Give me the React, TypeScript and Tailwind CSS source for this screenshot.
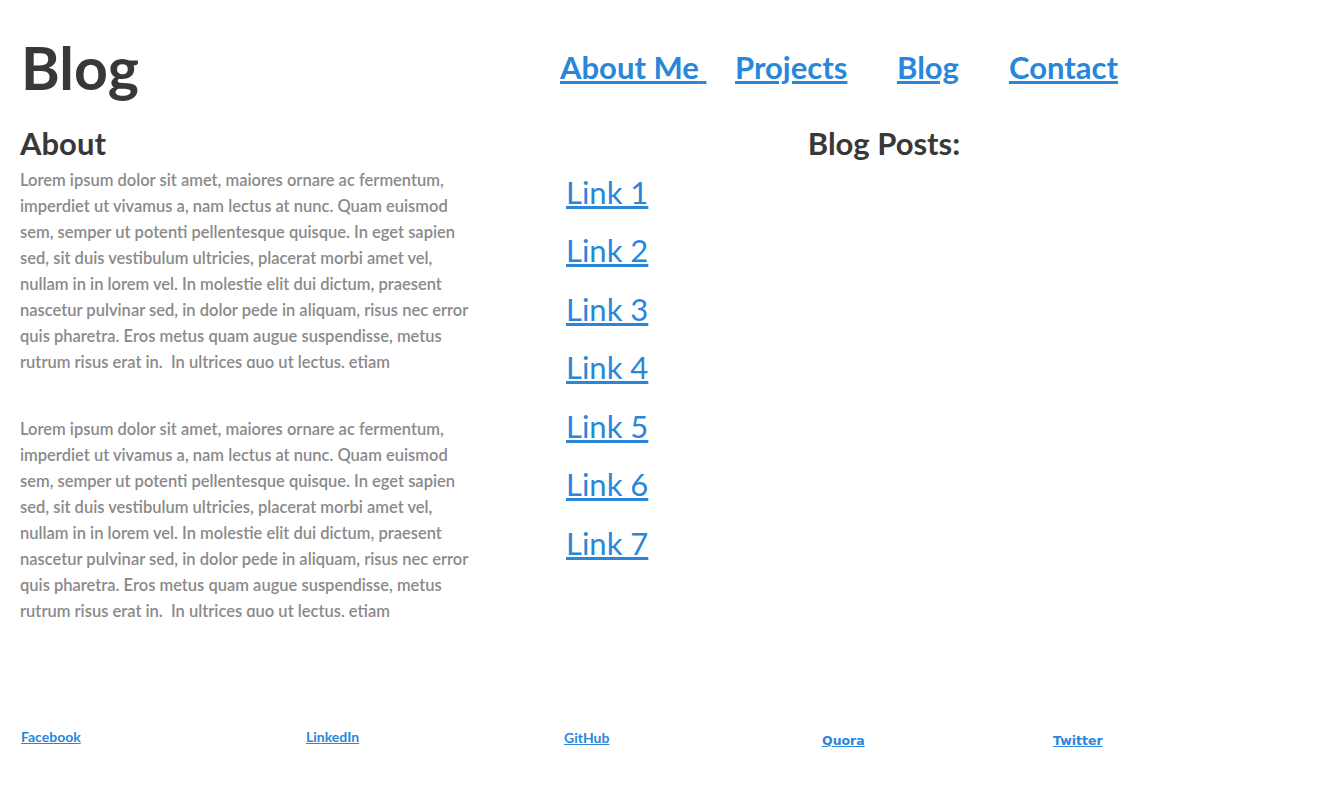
import React from "react";

// the reference wraps these lines exactly like this
const loremLines = [
  "Lorem ipsum dolor sit amet, maiores ornare ac fermentum,",
  "imperdiet ut vivamus a, nam lectus at nunc. Quam euismod",
  "sem, semper ut potenti pellentesque quisque. In eget sapien",
  "sed, sit duis vestibulum ultricies, placerat morbi amet vel,",
  "nullam in in lorem vel. In molestie elit dui dictum, praesent",
  "nascetur pulvinar sed, in dolor pede in aliquam, risus nec error",
  "quis pharetra. Eros metus quam augue suspendisse, metus",
  "rutrum risus erat in.  In ultrices quo ut lectus, etiam",
  "vestibulum urna a est, pretium luctus euismod nisl.",
];

const posts = ["Link 1", "Link 2", "Link 3", "Link 4", "Link 5", "Link 6", "Link 7"];

function Lorem({ className }: { className: string }) {
  return (
    <p
      className={
        "w-[452px] h-[201px] overflow-hidden text-[16.5px] font-semibold leading-[26px] text-[#8a8a8a] " +
        className
      }
    >
      {loremLines.map((l, i) => (
        <span key={i} className="block whitespace-pre">
          {l}
        </span>
      ))}
    </p>
  );
}

export default function App() {
  return (
    <div className="min-h-screen bg-white font-['Lato',sans-serif] text-[#383838]">
      {/* header */}
      <div className="flex items-center h-[90px] mt-[22px]">
        <h1 className="w-[560px] pl-[21px] text-[59px] font-bold leading-none">Blog</h1>
        <nav className="flex items-center">
          <a href="#" className="w-[175px] text-[31px] font-bold text-[#2a86d9] underline whitespace-pre">
            About Me{" "}
          </a>
          <a href="#" className="w-[162px] text-[31px] font-bold text-[#2a86d9] underline">
            Projects
          </a>
          <a href="#" className="w-[112px] text-[31px] font-bold text-[#2a86d9] underline">
            Blog
          </a>
          <a href="#" className="text-[31px] font-bold text-[#2a86d9] underline">
            Contact
          </a>
        </nav>
      </div>

      {/* main */}
      <div className="flex mt-[13px]">
        <div className="w-[546px] pl-5">
          <h2 className="text-[31px] font-bold leading-[36px]">About</h2>
          <Lorem className="mt-[6px]" />
          <Lorem className="mt-[48px]" />
        </div>
        <div className="flex-1 pr-[100px]">
          <h2 className="text-center text-[31px] font-bold leading-[36px]">Blog Posts:</h2>
          <ul className="ml-5 mt-[2px]">
            {posts.map((p) => (
              <li key={p} className="h-[58.5px] flex items-center">
                <a href="#" className="text-[31px] text-[#2a86d9] underline leading-none">
                  {p}
                </a>
              </li>
            ))}
          </ul>
        </div>
      </div>

      {/* footer */}
      <div className="flex items-start mt-[109px] pl-[21px] text-[14px] font-bold">
        <a href="#" className="w-[285px] text-[#2a86d9] underline">Facebook</a>
        <a href="#" className="w-[258px] text-[#2a86d9] underline">LinkedIn</a>
        <a href="#" className="w-[258px] mt-[1px] text-[#2a86d9] underline">GitHub</a>
        <a href="#" className="w-[231px] mt-[6px] text-[12.5px] font-['DejaVu_Sans',sans-serif] text-[#2a86d9] underline">
          Quora
        </a>
        <a href="#" className="mt-[6px] text-[12.5px] font-['DejaVu_Sans',sans-serif] text-[#2a86d9] underline">
          Twitter
        </a>
      </div>
    </div>
  );
}
